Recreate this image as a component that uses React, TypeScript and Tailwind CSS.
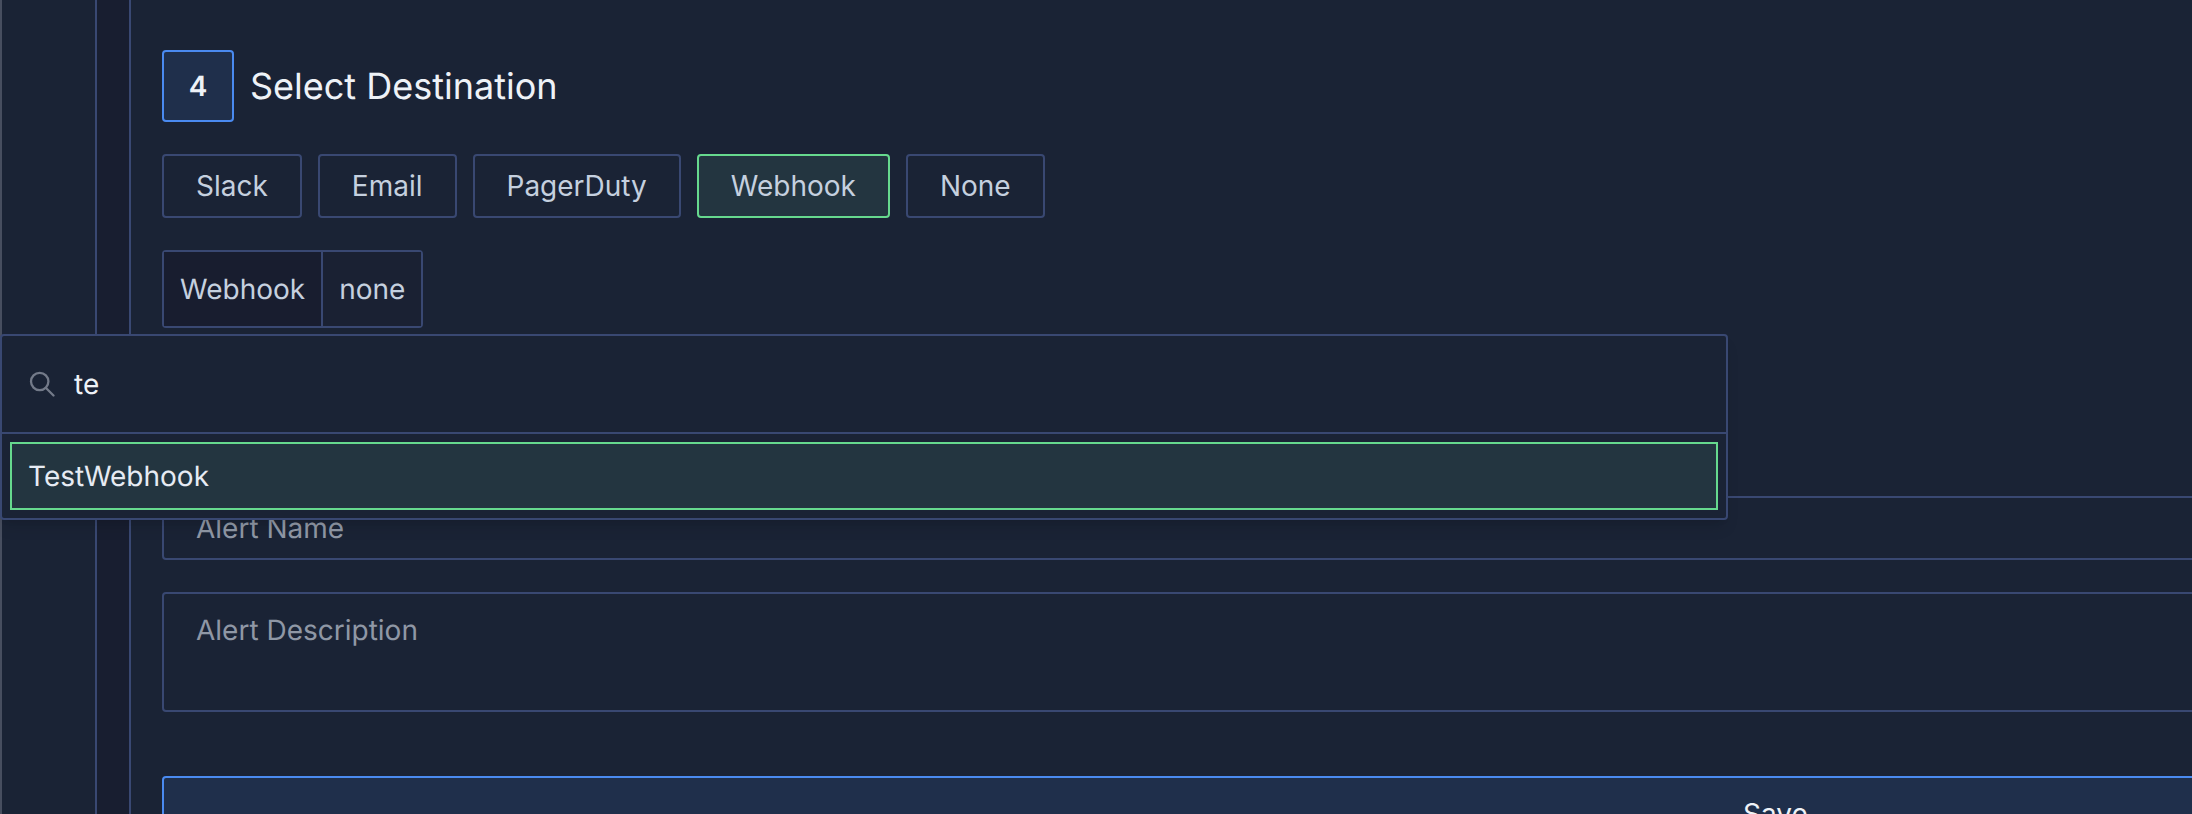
const destinations = [
  { label: "Slack", active: false },
  { label: "Email", active: false },
  { label: "PagerDuty", active: false },
  { label: "Webhook", active: true },
  { label: "None", active: false },
];

function SearchIcon() {
  return (
    <svg viewBox="0 0 26 26" width="26" height="26" fill="none" stroke="#737a89" strokeWidth="2.3" strokeLinecap="round" className="mr-[19px] shrink-0">
      <circle cx="10.7" cy="10.5" r="8.7" />
      <line x1="17" y1="17" x2="24.5" y2="24.5" />
    </svg>
  );
}

export default function App() {
  return (
    <div className="relative flex h-[814px] w-[2192px] overflow-hidden bg-[#1a2335] font-['Inter',sans-serif] text-[28px] leading-[40px] text-[#c5d0df] [text-rendering:geometricPrecision]">
      {/* Nested rails on the left */}
      <div className="w-[95px] shrink-0 border-l-2 border-[#474e5f]" />
      <div className="w-[34px] shrink-0 border-l-2 border-[#394872] bg-[#181e30]" />

      {/* Step content runs wider than the window */}
      <main className="w-[3260px] shrink-0 border-l-2 border-[#394872] pl-[31px] pt-[50px]">
        <div className="flex items-center gap-4">
          <div className="flex h-[72px] w-[72px] items-center justify-center rounded-[4px] border-2 border-[#4a8af0] bg-[#1f2f4b] font-semibold text-[#eef2f7]">
            4
          </div>
          <h2 className="text-[36px] leading-[56px] text-[#eef2f7]">Select Destination</h2>
        </div>

        <div className="mt-8 flex gap-4">
          {destinations.map((d) => (
            <button
              key={d.label}
              className={
                d.active
                  ? "h-16 rounded-[4px] border-2 border-[#66d98e] bg-[#233540] px-8"
                  : "h-16 rounded-[4px] border-2 border-[#394872] px-8"
              }
            >
              {d.label}
            </button>
          ))}
        </div>

        <div className="mt-8 flex h-[78px] w-[261px] rounded-[4px] border-2 border-[#394872]">
          <div className="flex items-center border-r-2 border-[#394872] bg-[#181d2f] px-4">Webhook</div>
          <div className="flex items-center bg-[#1a2133] px-4">none</div>
        </div>

        <div className="mt-[168px] flex h-16 items-center rounded-[4px] border-2 border-[#394872] px-8 text-[#8f97a5]">
          Alert Name
        </div>
        <div className="mt-8 h-[120px] rounded-[4px] border-2 border-[#394872] px-8 py-4 text-[#8f97a5]">
          Alert Description
        </div>
        <button className="mt-16 flex h-[76px] w-full items-center justify-center rounded-[4px] border-2 border-[#4a8af0] bg-[#1f2f4b] text-[#eef2f7]">
          Save
        </button>
      </main>

      {/* Open destination picker */}
      <div className="absolute left-0 top-[334px] w-[1728px] rounded-[4px] border-2 border-[#394872] bg-[#1a2335] shadow-lg">
        <div className="flex h-[98px] items-center border-b-2 border-[#394872] pl-[27px] text-[#eef2f7]">
          <SearchIcon />
          te
        </div>
        <div className="p-2">
          <div className="flex h-[68px] items-center border-2 border-[#66d98e] bg-[#233540] px-[16px] text-[#e6ebf3]">
            TestWebhook
          </div>
        </div>
      </div>
    </div>
  );
}
